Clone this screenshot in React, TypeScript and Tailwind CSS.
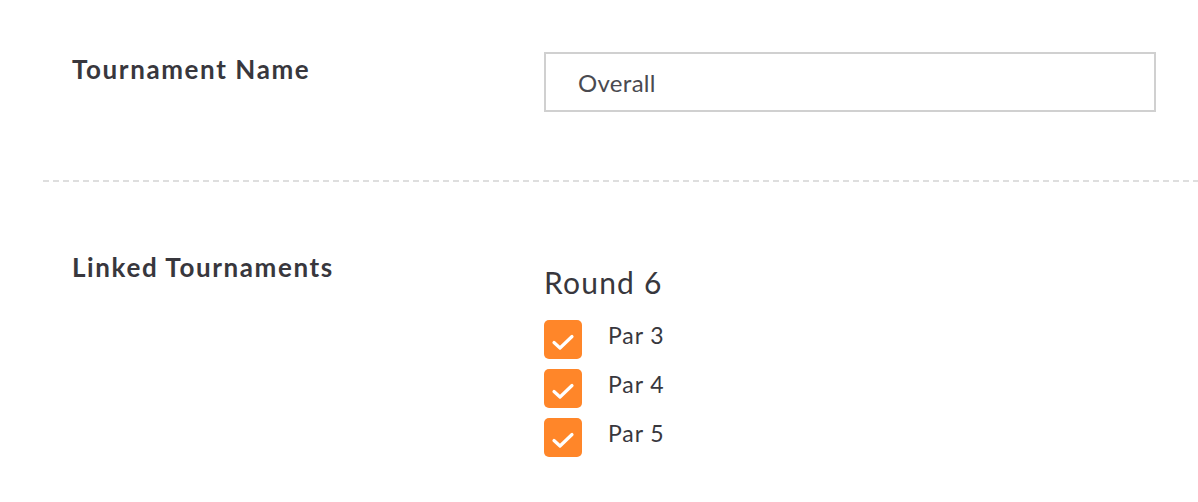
import React from 'react';

const font = { fontFamily: '"Lato", "Liberation Sans", sans-serif' };

const items = ['Par 3', 'Par 4', 'Par 5'];

const Check = () => (
  <div className="w-[38px] h-[39px] rounded-[5px] bg-[#ff8629] flex items-center justify-center shrink-0">
    <svg width="38" height="39" viewBox="0 0 38 39" fill="none">
      <path d="M10 22.5 L16 28 L28 16.5" stroke="white" strokeWidth="3.2" strokeLinecap="round" strokeLinejoin="round" />
    </svg>
  </div>
);

export default function App() {
  return (
    <div className="w-[1198px] h-[502px] bg-white overflow-hidden" style={font}>
      {/* Tournament name */}
      <div className="flex pt-[52px]">
        <div className="w-[544px] pl-[72px] pt-[2px]">
          <span className="text-[26px] leading-[30px] font-bold tracking-[1.6px] text-[#38373d] block">Tournament Name</span>
        </div>
        <input
          readOnly
          value="Overall"
          className="w-[612px] h-[60px] border-2 border-[#d0d0d0] pl-[32px] text-[24px] tracking-[0.3px] text-[#4a4a50] outline-none"
        />
      </div>

      <div className="ml-[43px] mt-[68px] h-[2px] bg-[repeating-linear-gradient(90deg,#dedede_0_6px,transparent_6px_10px)]" />

      {/* Linked tournaments */}
      <div className="flex pt-[70px]">
        <div className="w-[544px] pl-[72px]">
          <span className="text-[26px] leading-[30px] font-bold tracking-[1.6px] text-[#38373d] block">Linked Tournaments</span>
        </div>
        <div className="pt-[12px]">
          <div className="text-[30px] leading-[36px] tracking-[1.2px] text-[#38373d]">Round 6</div>
          <div className="mt-[20px] flex flex-col gap-[10px]">
            {items.map((t) => (
              <div key={t} className="flex items-start gap-[26px]">
                <Check />
                <span className="text-[23px] leading-[30px] tracking-[0.9px] text-[#38373d]">{t}</span>
              </div>
            ))}
          </div>
        </div>
      </div>
    </div>
  );
}
